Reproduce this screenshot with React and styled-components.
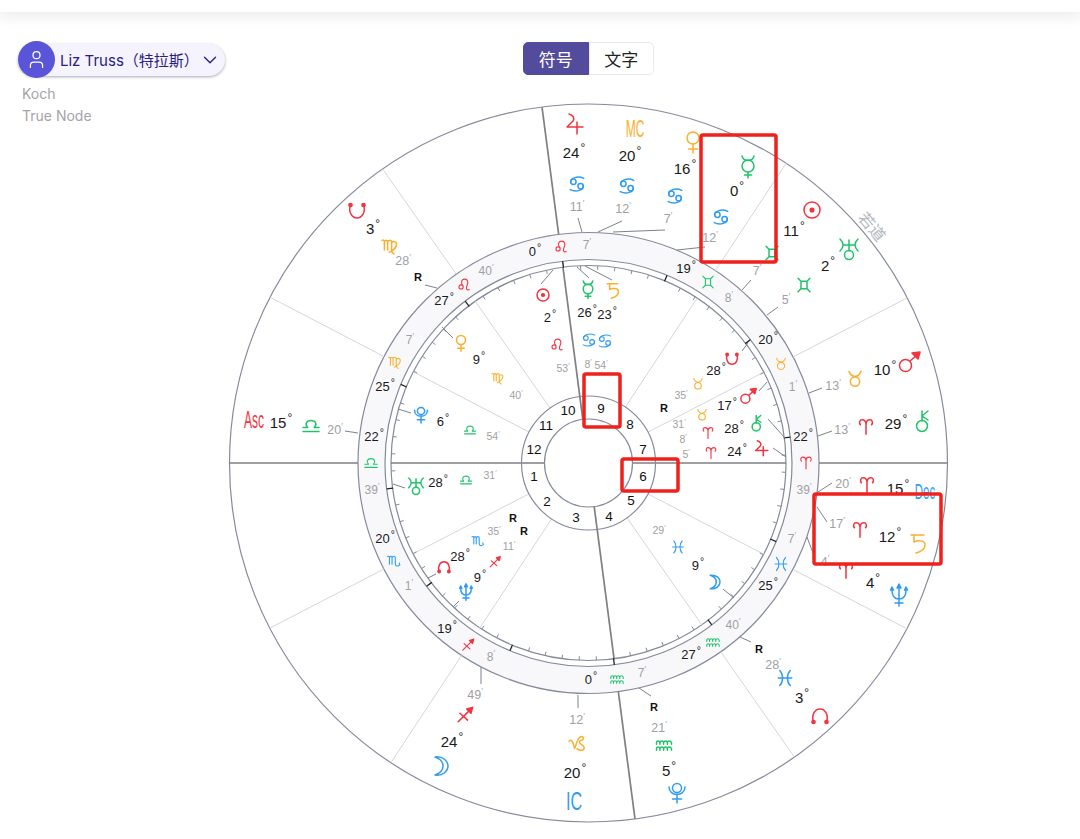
import React from 'react'
import styled, { createGlobalStyle } from 'styled-components'
import { User, ChevronDown } from 'lucide-react'

const CX = 588.5
const CY = 463
const RED = '#f4333f'
const ORANGE = '#fbb02d'
const GREEN = '#1fc46a'
const BLUE = '#2f9cf4'

const GlobalStyle = createGlobalStyle`
  body {
    margin: 0;
    background: #fff;
    font-family: "Inter", "Noto Sans CJK SC", sans-serif;
  }
`

const Page = styled.div`
  width: 1080px;
  height: 839px;
  overflow: hidden;
`

const TopBar = styled.div`
  height: 12px;
  background: #fff;
  box-shadow: 0 4px 14px rgba(30, 30, 60, 0.1);
`

const Content = styled.div`
  display: flex;
`

const Sidebar = styled.aside`
  width: 209px;
  padding: 32px 0 0 18px;
`

const PersonPill = styled.div`
  display: flex;
  align-items: center;
  width: 207px;
  height: 32px;
  border-radius: 16px;
  background: #f5f3fe;
  box-shadow: 0 1px 3px rgba(40, 40, 80, 0.4);
  color: #2a2080;
  font-size: 15px;
  white-space: nowrap;
`

const Avatar = styled.span`
  flex: none;
  display: flex;
  align-items: center;
  justify-content: center;
  width: 37px;
  height: 37px;
  margin: -1px 5px 0 0;
  border-radius: 50%;
  background: #5a54d8;
  color: #fff;
`

const PersonName = styled.span`
  flex: 1;
  padding-bottom: 2px;
`

const Chevron = styled(ChevronDown)`
  flex: none;
  margin-right: 7px;
`

const SettingList = styled.div`
  margin-top: 7px;
  padding-left: 4px;
  color: #a4a4a8;
  font-size: 14px;
  line-height: 22px;
`

const ChartColumn = styled.main`
  display: flex;
  flex-direction: column;
  align-items: center;
  width: 723px;
`

const Tabs = styled.div`
  display: flex;
  margin-top: 30px;
  width: 131px;
  height: 33px;
`

const Tab = styled.button`
  flex: 1;
  padding: 0;
  border: 1px solid ${(p) => (p.$active ? '#534b9c' : '#e8e8ee')};
  border-radius: ${(p) => (p.$active ? '5px 0 0 5px' : '0 5px 5px 0')};
  background: ${(p) => (p.$active ? '#534b9c' : '#fff')};
  color: ${(p) => (p.$active ? '#fff' : '#222')};
  font-family: "Noto Sans CJK SC", sans-serif;
  font-size: 17px;
`

const Chart = styled.svg`
  display: block;
  margin-top: 27px;
  font-family: "Liberation Sans", sans-serif;
`

const Ring = styled.circle`
  fill: ${(p) => p.$fill || 'none'};
  stroke: #858a9c;
  stroke-width: ${(p) => p.$w || 1.2};
`

const Spoke = styled.line`
  stroke: ${(p) => (p.$bold ? '#7f7f84' : '#d6d6d8')};
  stroke-width: ${(p) => (p.$bold ? 1.7 : 1)};
`

const Tick = styled.line`
  stroke: ${(p) => (p.$major ? '#222' : '#858a9c')};
  stroke-width: ${(p) => (p.$major ? 1.3 : 1)};
`

const Leader = styled.line`
  stroke: #7d818c;
  stroke-width: 1;
`

const Mark = styled.rect`
  fill: none;
  stroke: #f0201c;
  stroke-width: 3.5;
`

const GlyphGroup = styled.g`
  fill: none;
  stroke: ${(p) => p.$color};
  stroke-linecap: round;
  stroke-linejoin: round;
  & * {
    vector-effect: non-scaling-stroke;
    stroke-width: ${(p) => p.$w};
  }
  & .solid {
    fill: ${(p) => p.$color};
  }
`

const Deg = styled.text`
  fill: #1a1a1a;
  text-anchor: middle;
  dominant-baseline: central;
  font-size: ${(p) => p.$size}px;
`

const Minute = styled.text`
  fill: #a0a0a3;
  text-anchor: middle;
  dominant-baseline: central;
  font-size: ${(p) => p.$size}px;
`

const Retro = styled.text`
  fill: #111;
  text-anchor: middle;
  dominant-baseline: central;
  font-size: 11px;
  font-weight: 700;
`

const HouseNumber = styled.text`
  fill: #111;
  text-anchor: middle;
  dominant-baseline: central;
  font-size: 13.5px;
`

const Angle = styled.text`
  fill: ${(p) => p.$color};
  text-anchor: middle;
  dominant-baseline: central;
  font-size: ${(p) => p.$size}px;
`

const Ecliptic = styled.text`
  fill: #b4b8c2;
  text-anchor: middle;
  dominant-baseline: central;
  font-family: "Noto Sans CJK SC", sans-serif;
  font-size: 16px;
`

// every glyph is drawn in a box of about -10..10
const glyphs = {
  aries: { color: RED, d: 'M0 9V-3C0-8-3-9-5-9C-8-9-9-5-7-3M0-3C0-8 3-9 5-9C8-9 9-5 7-3' },
  taurus: { color: ORANGE, d: 'M-7-9C-5-4-3-3 0-3C3-3 5-4 7-9', c: [[0, 3, 5.5]] },
  gemini: { color: GREEN, d: 'M-8-9L-4-5H4L8-9M-8 9L-4 5H4L8 9M-4-5V5M4-5V5' },
  cancer: { color: BLUE, d: 'M-8.5-2C-9-8 1-11.5 9-7.5M8.5 2C9 8-1 11.5-9 7.5', c: [[-4.8, -3, 3.6], [4.8, 3, 3.6]] },
  leo: { color: RED, d: 'M-2 1C-6-5-3-9 1-9C6-9 7-4 5 0C3 4 3 9 8 7', c: [[-4.5, 3, 3.2]] },
  virgo: { color: ORANGE, d: 'M-10-7C-8-8-7-7-7-5V5M-7-5C-6-8-3-8-3-5V5M-3-5C-2-8 2-8 2-5V5C2 7 3 9 5 10M2-4C5-7 9-5 8-1C7 3 3 6-1 8' },
  libra: { color: GREEN, d: 'M-10 7H10M-10 2H-4C-8-2-6-7 0-7C6-7 8-2 4 2H10' },
  scorpio: { color: BLUE, d: 'M-10-7C-8-8-7-7-7-5V5M-7-5C-6-8-3-8-3-5V5M-3-5C-2-8 2-8 2-5V4C2 8 5 9 9 6M9 6L8 3' },
  sagittarius: { color: RED, d: 'M-8 8L6-6M-6-2L3 6', solid: 'M2-7L9-9L7-2Z' },
  capricorn: { color: ORANGE, d: 'M-10-2C-8-5-6-3-5 0L-3 7C0-1 1-7 5-8C8-9 9-5 7-4C5-3 3-4 3-1C3 2 9 2 9 6C9 10 3 10 0 7' },
  aquarius: { color: GREEN, d: 'M-10-1V-3C-10-6-6-6-5.5-3V-1M-5.5-3C-5-6-1-6-.5-3V-1M-.5-3C0-6 4-6 4.5-3V-1M4.5-3C5-6 9-6 10-3V-1M-10 7V5C-10 2-6 2-5.5 5V7M-5.5 5C-5 2-1 2-.5 5V7M-.5 5C0 2 4 2 4.5 5V7M4.5 5C5 2 9 2 10 5V7' },
  pisces: { color: BLUE, d: 'M-7-10C-2-5-2 5-7 10M7-10C2-5 2 5 7 10M-9 0H9' },
  sun: { color: RED, c: [[0, 0, 8]], dots: [[0, 0, 1.8]] },
  moon: { color: BLUE, d: 'M-5-9C3-10 8-5 8 0C8 5 3 10-5 9C1 7 3 4 3 0C3-4 1-7-5-9Z' },
  mercury: { color: GREEN, d: 'M-6-10C-5-6-3-5.5 0-5.5C3-5.5 5-6 6-10M0 6V12M-3.5 9H3.5', c: [[0, 0, 6]] },
  venus: { color: ORANGE, d: 'M0 2V11M-4.5 7H4.5', c: [[0, -4, 6]] },
  mars: { color: RED, d: 'M1-1L8-7', c: [[-3.5, 3.5, 6]], solid: 'M3-9L11-10L9-3Z' },
  jupiter: { color: RED, d: 'M-5-11C-1-10 1-7-1-4L-7 2H9M3-3V9' },
  saturn: { color: ORANGE, d: 'M-6-9H7M-3-9V-2C1-4 8-4 8 1C8 6 3 8-1 9' },
  uranus: { color: GREEN, d: 'M0 2V-9M-9-10C-5-6-5-2-9 2M9-10C5-6 5-2 9 2M-6-4H6', c: [[0, 6, 4.5]] },
  neptune: { color: BLUE, d: 'M0-9V11M-4 8H4M-7-5C-7 2-4 4 0 4C4 4 7 2 7-5', solid: 'M0-11L-2-7H2ZM-7-8L-8.5-5H-5.5ZM7-8L5.5-5H8.5Z' },
  pluto: { color: BLUE, d: 'M-8-6C-8 4 8 4 8-6M0 1V10M-4.5 6H4.5', c: [[0, -5, 4.5]] },
  chiron: { color: GREEN, d: 'M-1 0V-10M-1-5L5-10M-1-5L5-1', c: [[-1, 5, 5.5]] },
  north: { color: RED, d: 'M-6.5 6C-9-1-5-7 0-7C5-7 9-1 6.5 6', dots: [[-6.5, 6, 1.6], [6.5, 6, 1.6]] },
  south: { color: RED, d: 'M-6.5-6C-9 1-5 7 0 7C5 7 9 1 6.5-6', dots: [[-6.5, -6, 1.6], [6.5, -6, 1.6]] },
}

// name, x, y, scale
const placed = [
  ['jupiter', 574, 125, 1], ['cancer', 577, 184, .75], ['venus', 693, 142, 1], ['cancer', 627, 186, .75],
  ['cancer', 675, 196, .75], ['mercury', 748, 166, 1], ['cancer', 721, 217, .75], ['gemini', 772, 253, .75],
  ['sun', 812, 210, 1], ['uranus', 849, 249, 1], ['gemini', 804, 285, .75], ['mars', 909, 362, 1],
  ['taurus', 855, 379, .85], ['chiron', 923, 421, 1], ['aries', 866, 427, .8], ['aries', 867, 485, .8],
  ['aries', 860, 530, .8], ['saturn', 917, 544, 1], ['aries', 846, 571, .8], ['neptune', 899, 595, 1],
  ['pisces', 785, 678, .75], ['north', 820, 716, 1], ['aquarius', 664, 745, .75], ['pluto', 677, 793, 1],
  ['capricorn', 577, 743, .8], ['sagittarius', 465, 715, .85], ['moon', 440, 766, 1],
  ['libra', 311, 426, .8], ['south', 357, 211, 1], ['virgo', 390, 246, .8],
  // zodiac band
  ['leo', 561, 247, .65], ['gemini', 708, 282, .65], ['taurus', 781, 364, .65], ['aries', 806, 463, .65],
  ['pisces', 781, 564, .65], ['aquarius', 713, 642, .62], ['aquarius', 617, 679, .62], ['sagittarius', 468, 645, .65],
  ['scorpio', 394, 561, .65], ['libra', 371, 463, .62], ['virgo', 395, 362, .65], ['leo', 464, 285, .65],
  // inside the band
  ['sun', 543, 295, .75], ['leo', 557, 345, .65], ['mercury', 588, 289, .8], ['cancer', 589, 340, .65],
  ['saturn', 612, 291, .8], ['cancer', 605, 341, .65], ['south', 732, 359, .75], ['taurus', 698, 384, .6],
  ['mars', 748, 396, .75], ['taurus', 702, 415, .6], ['chiron', 757, 423, .75], ['aries', 708, 433, .6],
  ['jupiter', 761, 449, .75], ['aries', 711, 453, .6], ['venus', 461, 343, .75], ['virgo', 498, 378, .6],
  ['pluto', 421, 415, .8], ['libra', 470, 430, .55], ['uranus', 416, 486, .8], ['libra', 466, 480, .55],
  ['north', 444, 567, .75], ['scorpio', 478, 541, .6], ['neptune', 466, 592, .75], ['sagittarius', 495, 562, .6],
  ['moon', 714, 582, .75], ['pisces', 678, 547, .6],
]

// text, x, y, size
const degrees = [
  ['24', 574, 152, 15], ['20', 630, 155, 15], ['16', 685, 168, 15], ['0', 737, 190, 15], ['11', 794, 230, 15],
  ['2', 828, 265, 15], ['10', 885, 369, 15], ['29', 896, 423, 15], ['15', 898, 488, 15], ['12', 890, 536, 15],
  ['4', 873, 582, 15], ['3', 802, 697, 15], ['5', 669, 770, 15], ['20', 575, 772, 15], ['24', 452, 741, 15],
  ['15', 281, 422, 15], ['3', 373, 228, 15],
  ['0', 535, 251, 13], ['19', 686, 268, 13], ['20', 768, 339, 13], ['22', 803, 436, 13], ['25', 768, 585, 13],
  ['27', 691, 654, 13], ['0', 591, 679, 13], ['19', 447, 628, 13], ['20', 385, 538, 13], ['22', 374, 436, 13],
  ['25', 385, 386, 13], ['27', 444, 300, 13],
  ['2', 550, 317, 13], ['26', 587, 312, 13], ['23', 607, 314, 13], ['28', 716, 370, 13], ['17', 727, 405, 13],
  ['28', 734, 428, 13], ['24', 737, 451, 13], ['9', 479, 359, 13], ['6', 443, 421, 13], ['28', 438, 482, 13],
  ['28', 460, 556, 13], ['9', 480, 577, 13], ['9', 698, 565, 13],
]

const minutes = [
  ['11', 577, 207, 12.5], ['12', 623, 209, 12.5], ['7', 668, 219, 12.5], ['12', 710, 238, 12.5], ['7', 757, 271, 12.5],
  ['5', 786, 300, 12.5], ['13', 833, 386, 12.5], ['13', 842, 430, 12.5], ['20', 843, 484, 12.5], ['17', 837, 524, 12.5],
  ['4', 825, 562, 12.5], ['28', 773, 665, 12.5], ['21', 659, 728, 12.5], ['12', 577, 720, 12.5], ['49', 475, 695, 12.5],
  ['20', 335, 430, 12.5], ['28', 403, 261, 12.5],
  ['7', 587, 245, 12], ['8', 729, 298, 12], ['1', 793, 387, 12], ['39', 804, 490, 12], ['7', 792, 539, 12],
  ['40', 733, 625, 12], ['7', 642, 673, 12], ['8', 491, 657, 12], ['1', 409, 586, 12], ['39', 372, 490, 12],
  ['7', 410, 340, 12], ['40', 486, 271, 12],
  ['53', 563, 368, 10.5], ['8', 588, 364, 10.5], ['54', 601, 365, 10.5], ['35', 681, 395, 10.5], ['31', 679, 424, 10.5],
  ['8', 683, 439, 10.5], ['5', 686, 454, 10.5], ['40', 516, 395, 10.5], ['54', 493, 436, 10.5], ['31', 490, 475, 10.5],
  ['35', 494, 531, 10.5], ['11', 509, 546, 10.5], ['29', 659, 530, 10.5],
]

const retros = [[418, 277], [664, 408], [759, 649], [654, 707], [513, 518], [524, 531]]

const leaders = [
  [578, 218, 582, 232], [622, 221, 598, 232], [665, 230, 613, 232], [677, 250, 705, 247], [742, 290, 751, 280],
  [767, 315, 778, 307], [809, 393, 822, 388], [818, 436, 832, 431], [818, 492, 832, 483], [817, 507, 827, 522],
  [807, 537, 813, 553], [740, 637, 751, 642], [639, 688, 651, 696], [578, 695, 578, 708], [481, 667, 481, 684],
  [345, 431, 358, 433], [425, 285, 437, 288], [553, 270, 541, 284], [577, 267, 589, 278], [585, 266, 612, 280],
  [748, 343, 742, 351], [767, 382, 759, 391], [768, 419, 785, 438], [773, 448, 786, 457], [442, 327, 453, 338],
  [398, 409, 411, 413], [393, 484, 405, 488], [428, 578, 436, 574], [453, 607, 459, 601], [723, 589, 734, 598],
]

const houses = [
  [1, 534, 476], [2, 547, 501], [3, 576, 517], [4, 609, 516], [5, 631, 500], [6, 643, 476],
  [7, 643, 449], [8, 630, 424], [9, 601, 408], [10, 568, 410], [11, 546, 425], [12, 534, 449],
]

const spokes = [
  { a: -7.44, bold: true }, { a: 172.56, bold: true }, { a: 90, bold: true }, { a: 270, bold: true },
  { a: 33.4 }, { a: 213.4 }, { a: 62.6 }, { a: 242.6 }, { a: -35 }, { a: 145 }, { a: -62.5 }, { a: 117.5 },
]

const marks = [
  [701, 135, 75, 127], [584, 374, 36, 53], [622, 459, 56, 32], [814, 494, 127, 70],
]

const polar = (a, r) => {
  const rad = (a * Math.PI) / 180
  return [CX + r * Math.sin(rad), CY - r * Math.cos(rad)]
}

const Segment = ({ a, r1, r2, as: Comp, ...rest }) => {
  const [x1, y1] = polar(a, r1)
  const [x2, y2] = polar(a, r2)
  return <Comp x1={x1} y1={y1} x2={x2} y2={y2} {...rest} />
}

const Glyph = ({ name, x, y, s }) => {
  const g = glyphs[name]
  return (
    <GlyphGroup $color={g.color} $w={s < 0.7 ? 1.1 : 1.5} transform={`translate(${x} ${y}) scale(${s})`}>
      {g.d && <path d={g.d} />}
      {g.solid && <path className="solid" d={g.solid} />}
      {(g.c || []).map(([cx, cy, r]) => <circle key={cx + '-' + cy} cx={cx} cy={cy} r={r} />)}
      {(g.dots || []).map(([cx, cy, r]) => <circle className="solid" key={cx + '-' + cy} cx={cx} cy={cy} r={r} />)}
    </GlyphGroup>
  )
}

const NatalChart = () => (
  <Chart width="723" height="723" viewBox="227 102 723 723">
    <Ring cx={CX} cy={CY} r={359} />
    <Ring cx={CX} cy={CY} r={230.5} $fill="#f8f8fb" />
    <Ring cx={CX} cy={CY} r={203.5} $fill="#fff" />
    <Ring cx={CX} cy={CY} r={197.5} />

    {spokes.map(({ a, bold }) => (
      <g key={a}>
        <Segment as={Spoke} a={a} r1={bold ? 44 : 67} r2={197.5} $bold={bold} />
        <Segment as={Spoke} a={a} r1={230.5} r2={359} $bold={bold} />
      </g>
    ))}

    {Array.from({ length: 72 }, (_, i) => (
      <Segment
        key={i}
        as={Tick}
        a={22.7 + i * 5}
        r1={i % 6 === 0 ? 197 : 193.5}
        r2={i % 6 === 0 ? 203.5 : 197.5}
        $major={i % 6 === 0}
      />
    ))}

    <Ring cx={CX} cy={CY} r={67} />
    <Ring cx={CX} cy={CY} r={44} />

    {leaders.map(([x1, y1, x2, y2]) => (
      <Leader key={`${x1}-${y1}`} x1={x1} y1={y1} x2={x2} y2={y2} />
    ))}

    {placed.map(([name, x, y, s], i) => (
      <Glyph key={i} name={name} x={x} y={y} s={s} />
    ))}

    {degrees.map(([text, x, y, size], i) => (
      <Deg key={i} x={x} y={y} $size={size}>
        {text}
        <tspan dx="1" dy={-size * 0.3} fontSize={size * 0.8}>°</tspan>
      </Deg>
    ))}

    {minutes.map(([text, x, y, size], i) => (
      <Minute key={i} x={x} y={y} $size={size}>
        {text}
        <tspan dy={-size * 0.3} fontSize={size * 0.7}>′</tspan>
      </Minute>
    ))}

    {retros.map(([x, y]) => (
      <Retro key={`${x}-${y}`} x={x} y={y}>R</Retro>
    ))}

    {houses.map(([n, x, y]) => (
      <HouseNumber key={n} x={x} y={y}>{n}</HouseNumber>
    ))}

    <Angle $color={ORANGE} $size={24} transform="translate(635 129) scale(.5 1)">MC</Angle>
    <Angle $color={RED} $size={24} transform="translate(254 420) scale(.5 1)">Asc</Angle>
    <Angle $color={BLUE} $size={22} transform="translate(925 491) scale(.52 1)">Dec</Angle>
    <Angle $color={BLUE} $size={26} transform="translate(574 801) scale(.62 1)">IC</Angle>
    <Ecliptic transform="translate(873 226) rotate(50)">若道</Ecliptic>

    {marks.map(([x, y, w, h]) => (
      <Mark key={x} x={x} y={y} width={w} height={h} rx="2" />
    ))}
  </Chart>
)

const App = () => (
  <Page>
    <GlobalStyle />
    <TopBar />
    <Content>
      <Sidebar>
        <PersonPill>
          <Avatar><User size={21} strokeWidth={1.4} /></Avatar>
          <PersonName>Liz Truss（特拉斯）</PersonName>
          <Chevron size={22} strokeWidth={1.5} />
        </PersonPill>
        <SettingList>
          <div>Koch</div>
          <div>True Node</div>
        </SettingList>
      </Sidebar>
      <ChartColumn>
        <Tabs>
          <Tab $active>符号</Tab>
          <Tab>文字</Tab>
        </Tabs>
        <NatalChart />
      </ChartColumn>
    </Content>
  </Page>
)

export default App
